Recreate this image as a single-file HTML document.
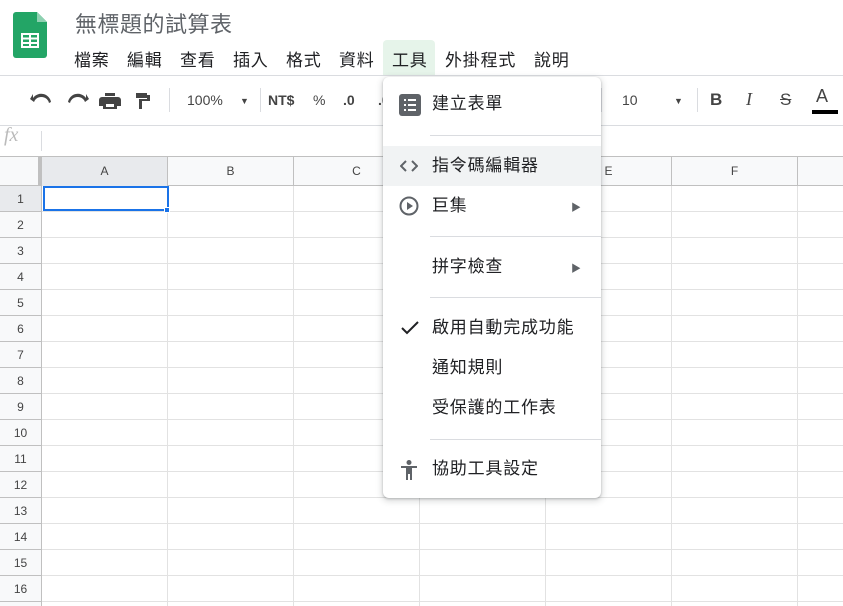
<!DOCTYPE html>
<html><head><meta charset="utf-8"><style>
*{margin:0;padding:0;box-sizing:border-box}
body{width:843px;height:606px;overflow:hidden;background:#fff;font-family:"Liberation Sans","Noto Sans CJK TC",sans-serif;position:relative;color:#202124}
.abs{position:absolute}
.title{left:75px;top:7px;font-size:22px;letter-spacing:0.5px;color:#5f6368}
.menu span{position:absolute;top:46px;font-size:17px;letter-spacing:0.8px;color:#202124}
.tb{font-size:14px;color:#444;position:absolute;top:92px}
.grid{left:42px;top:186px;width:801px;height:420px;background:
repeating-linear-gradient(to bottom,transparent 0 25px,#e2e2e2 25px 26px),
repeating-linear-gradient(to right,transparent 0 125px,#e2e2e2 125px 126px)}
.rh{left:0;top:186px;width:42px;height:420px;background:#f8f9fa;border-right:1px solid #c0c0c0}
.rh div{height:26px;border-bottom:1px solid #c0c0c0;font-size:12px;color:#444;text-align:center;line-height:26px}
.ch{left:0;top:156px;width:843px;height:30px;background:#f8f9fa;border-top:1px solid #c0c0c0;border-bottom:1px solid #c0c0c0}
.ch div{position:absolute;top:0;height:29px;width:126px;border-right:1px solid #c0c0c0;font-size:12px;color:#444;text-align:center;line-height:29px}
.dd{left:383px;top:77px;width:218px;height:421px;background:#fff;border-radius:6px;box-shadow:0 2px 6px 2px rgba(60,64,67,.15),0 1px 2px rgba(60,64,67,.3)}
.it{position:absolute;left:0;width:218px;height:40px;font-size:17px;letter-spacing:0.8px;line-height:40px;padding-left:49px;color:#202124}
.sep{position:absolute;left:47px;width:171px;height:1px;background:#dadce0}
.arr{position:absolute;right:20px;font-size:10px;color:#5f6368}
</style></head><body>
<svg class="abs" style="left:13px;top:12px" width="34" height="46" viewBox="0 0 34 46"><path d="M3 0h21l10 10v33a3 3 0 0 1-3 3H3a3 3 0 0 1-3-3V3a3 3 0 0 1 3-3z" fill="#23a566"/><path d="M24 0l10 10h-10z" fill="#8ed1b1"/><rect x="8" y="21" width="18" height="15" fill="#fff"/><g fill="#23a566"><rect x="10" y="23" width="6" height="2.5"/><rect x="18" y="23" width="6" height="2.5"/><rect x="10" y="27.5" width="6" height="2.5"/><rect x="18" y="27.5" width="6" height="2.5"/><rect x="10" y="32" width="6" height="2"/><rect x="18" y="32" width="6" height="2"/></g></svg>
<div class="abs title">無標題的試算表</div>
<div class="abs" style="left:383px;top:40px;width:52px;height:36px;background:#e6f4ea;border-radius:4px 4px 0 0"></div>
<div class="menu"><span style="left:74px">檔案</span><span style="left:127px">編輯</span><span style="left:180px">查看</span><span style="left:233px">插入</span><span style="left:286px">格式</span><span style="left:339px">資料</span><span style="left:392px">工具</span><span style="left:445px">外掛程式</span><span style="left:534px">說明</span></div>
<div class="abs" style="left:0;top:75px;width:843px;height:1px;background:#dadce0"></div>
<div class="abs" style="left:0;top:125px;width:843px;height:1px;background:#dadce0"></div>
<svg class="abs" style="left:29px;top:92px" width="135" height="18" viewBox="0 0 135 18" fill="#444"><path d="M4 6v-4l-3 5 4 3 1-2a8 8 0 0 1 14 3l2-1a10 10 0 0 0-18-4z"/><path d="M51 6v-4l3 5-4 3-1-2a8 8 0 0 0-14 3l-2-1a10 10 0 0 1 18-4z" transform="translate(6 0)"/><path d="M73 5h16a3 3 0 0 1 3 3v6h-4v3h-14v-3h-4v-6a3 3 0 0 1 3-3zm3-4h10v3h-10zm1 11v3h8v-3z"/><path d="M107 1h11v5h-11zM118 3h3v6h-8v8h-3v-10h8z"/></svg>
<div class="abs" style="left:169px;top:88px;width:1px;height:24px;background:#dadce0"></div>
<div class="tb" style="left:187px">100%</div>
<div class="tb" style="left:240px;font-size:9px;top:96px">▼</div>
<div class="abs" style="left:260px;top:88px;width:1px;height:24px;background:#dadce0"></div>
<div class="tb" style="left:268px;font-weight:bold">NT$</div>
<div class="tb" style="left:313px">%</div>
<div class="tb" style="left:343px;font-weight:bold">.0</div>
<div class="tb" style="left:378px;font-weight:bold">.0</div>
<div class="abs" style="left:601px;top:88px;width:1px;height:24px;background:#dadce0"></div>
<div class="tb" style="left:622px">10</div>
<div class="tb" style="left:674px;font-size:9px;top:96px">▼</div>
<div class="abs" style="left:697px;top:88px;width:1px;height:24px;background:#dadce0"></div>
<div class="tb" style="left:710px;font-weight:bold;font-size:17px;top:90px">B</div>
<div class="tb" style="left:746px;font-style:italic;font-size:18px;top:89px;font-family:'Liberation Serif',serif">I</div>
<div class="tb" style="left:780px;font-size:17px;top:90px;text-decoration:line-through">S</div>
<div class="tb" style="left:816px;font-size:18px;top:86px">A</div>
<div class="abs" style="left:812px;top:110px;width:26px;height:4px;background:#000"></div>
<div class="abs" style="left:4px;top:124px;font-size:20px;color:#bbb;font-style:italic;font-family:'Liberation Serif',serif">fx</div>
<div class="abs" style="left:41px;top:131px;width:1px;height:20px;background:#dadce0"></div>
<div class="abs grid"></div>
<div class="abs ch"><div style="left:0;width:42px;border-right:4px solid #c0c0c0"></div><div style="left:42px;background:#e8eaed">A</div><div style="left:168px">B</div><div style="left:294px">C</div><div style="left:420px">D</div><div style="left:546px">E</div><div style="left:672px">F</div><div style="left:798px"></div></div>
<div class="abs rh"><div style="background:#e8eaed">1</div><div>2</div><div>3</div><div>4</div><div>5</div><div>6</div><div>7</div><div>8</div><div>9</div><div>10</div><div>11</div><div>12</div><div>13</div><div>14</div><div>15</div><div>16</div></div>
<div class="abs" style="left:43px;top:186px;width:126px;height:25px;border:2px solid #1a73e8"></div>
<div class="abs" style="left:164px;top:207px;width:6px;height:6px;background:#1a73e8;border:1px solid #fff"></div>
<div class="abs dd">
<div class="it" style="top:7px">建立表單</div>
<svg class="abs" style="left:16px;top:17px" width="22" height="22" viewBox="0 0 22 22"><rect width="22" height="22" rx="3" fill="#5f6368"/><g fill="#fff"><rect x="5" y="5" width="2" height="2"/><rect x="9" y="5" width="8" height="2"/><rect x="5" y="10" width="2" height="2"/><rect x="9" y="10" width="8" height="2"/><rect x="5" y="15" width="2" height="2"/><rect x="9" y="15" width="8" height="2"/></g></svg>
<div class="sep" style="top:58px"></div>
<div class="it" style="top:69px;background:#f1f3f4">指令碼編輯器</div>
<svg class="abs" style="left:17px;top:83px" width="18" height="12" viewBox="0 0 18 12" fill="none" stroke="#5f6368" stroke-width="2"><path d="M6 1L1 6l5 5M12 1l5 5-5 5"/></svg>
<div class="it" style="top:109px">巨集</div>
<svg class="abs" style="left:16px;top:119px" width="20" height="20" viewBox="0 0 20 20"><circle cx="10" cy="10" r="8.5" fill="none" stroke="#5f6368" stroke-width="2"/><path d="M8 6v8l6-4z" fill="#5f6368"/></svg>
<div class="arr" style="top:122px">▶</div>
<div class="sep" style="top:159px"></div>
<div class="it" style="top:170px">拼字檢查</div>
<div class="arr" style="top:183px">▶</div>
<div class="sep" style="top:220px"></div>
<div class="it" style="top:231px">啟用自動完成功能</div>
<svg class="abs" style="left:18px;top:244px" width="18" height="14" viewBox="0 0 18 14" fill="none" stroke="#202124" stroke-width="2"><path d="M1 7l5 5L17 1"/></svg>
<div class="it" style="top:271px">通知規則</div>
<div class="it" style="top:311px">受保護的工作表</div>
<div class="sep" style="top:362px"></div>
<div class="it" style="top:372px">協助工具設定</div>
<svg class="abs" style="left:18px;top:383px" width="16" height="20" viewBox="0 0 16 20" fill="#5f6368"><circle cx="8" cy="2.5" r="2.5"/><path d="M0 6h16v2h-5v12h-2v-6h-2v6h-2v-12h-5z"/></svg>
</div>
</body></html>
